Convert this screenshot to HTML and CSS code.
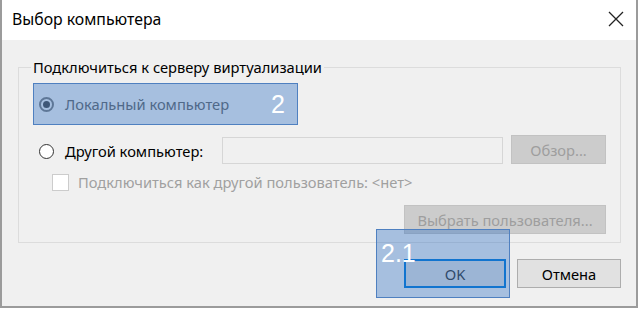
FILE: index.html
```html
<!DOCTYPE html>
<html lang="ru">
<head>
    <meta charset="UTF-8">
    <meta name="viewport" content="width=device-width, initial-scale=1.0">
    <title>Выбор компьютера</title>
    <link rel="stylesheet" href="styles.css">
</head>
<body>
    <div class="window">
        <div class="titlebar">
            <span class="title">Выбор компьютера</span>
            <svg class="close" width="16" height="16" viewBox="0 0 16 16">
                <path d="M1 1 L15 15 M15 1 L1 15" stroke="#222" stroke-width="1.3" fill="none"/>
            </svg>
        </div>
        <div class="content">
            <div class="group">
                <span class="legend">Подключиться к серверу виртуализации</span>
                <div class="row row-local">
                    <span class="radio checked"></span>
                    <span class="faded">Локальный компьютер</span>
                </div>
                <div class="row row-other">
                    <span class="radio-label"><span class="radio"></span>Другой компьютер:</span>
                    <div class="textbox"></div>
                    <div class="btn disabled browse">Обзор...</div>
                </div>
                <div class="row row-check">
                    <span class="check"></span>
                    <span class="muted">Подключиться как другой пользователь: &lt;нет&gt;</span>
                </div>
                <div class="row row-user">
                    <div class="btn disabled pick">Выбрать пользователя...</div>
                </div>
            </div>
            <div class="footer">
                <div class="btn default">OK</div>
                <div class="btn cancel">Отмена</div>
            </div>
        </div>
        <div class="mark mark-local"><span>2</span></div>
        <div class="mark mark-ok"><span>2.1</span></div>
    </div>
</body>
</html>
```

FILE: styles.css
```css
body {
    margin: 0;
    font-family: "Noto Sans", sans-serif;
    font-size: 14.7px;
    color: #000;
    background: #fff;
}
.window {
    position: relative;
    width: 638px;
    height: 308px;
    box-sizing: border-box;
    border: 2px solid #9b9b9b;
    border-top: none;
    background: #f0f0f0;
}
.titlebar {
    height: 40px;
    background: #fff;
    display: flex;
    align-items: center;
    justify-content: space-between;
    padding: 0 12px 0 10px;
}
.title {
    font-size: 15.8px;
    margin-top: -2px;
}
.close {
    margin-top: -3px;
}
.content {
    padding: 27px 15px 0 16px;
}
.group {
    position: relative;
    border: 1px solid #dcdcdc;
    padding: 26px 14px 8px 20px;
}
.legend {
    position: absolute;
    top: -11px;
    left: 12px;
    padding: 0 2px;
    background: #f0f0f0;
}
.row {
    display: flex;
    align-items: center;
}
.row-local {
    height: 20px;
}
.row-other {
    height: 29px;
    margin-top: 21px;
}
.row-check {
    height: 20px;
    margin-top: 8px;
    padding-left: 13px;
}
.row-user {
    margin-top: 13px;
    justify-content: flex-end;
}
.radio {
    width: 15px;
    height: 15px;
    box-sizing: border-box;
    border: 1.5px solid #333;
    border-radius: 50%;
    background: #fff;
    margin-right: 11px;
    display: flex;
    align-items: center;
    justify-content: center;
}
.radio.checked {
    border: 2px solid #7d7d7d;
    background: #f0f0f0;
}
.radio.checked::after {
    content: "";
    width: 7px;
    height: 7px;
    border-radius: 50%;
    background: #4a4a4a;
}
.faded {
    color: #666;
}
.radio-label {
    display: flex;
    align-items: center;
    width: 183px;
    margin-top: 3px;
}
.textbox {
    width: 281px;
    height: 27px;
    box-sizing: border-box;
    border: 1px solid #d6d6d6;
    background: #f0f0f0;
    margin-top: 2px;
    margin-right: 8px;
}
.btn {
    height: 29px;
    box-sizing: border-box;
    border: 1px solid #adadad;
    background: #e1e1e1;
    display: flex;
    align-items: center;
    justify-content: center;
}
.btn.disabled {
    background: #cccccc;
    border-color: #c2c2c2;
    color: #9e9e9e;
}
.browse {
    width: 95px;
}
.pick {
    width: 202px;
}
.check {
    width: 17px;
    height: 17px;
    box-sizing: border-box;
    border: 1px solid #cccccc;
    background: #fff;
    margin-right: 9px;
}
.muted {
    color: #a0a0a0;
}
.footer {
    display: flex;
    justify-content: flex-end;
    gap: 11px;
    margin-top: 16px;
}
.default {
    width: 102px;
    border: 2px solid #0078d7;
    color: #333;
}
.cancel {
    width: 104px;
}
.mark {
    position: absolute;
    box-sizing: border-box;
    border: 1px solid #4f80c0;
    background: rgba(45, 110, 195, 0.38);
    color: #fff;
    font-family: "Liberation Sans", sans-serif;
    font-size: 25px;
    line-height: 1;
}
.mark-local {
    left: 31px;
    top: 83px;
    width: 265px;
    height: 42px;
    display: flex;
    align-items: center;
    justify-content: flex-end;
    padding-right: 12px;
}
.mark-ok {
    left: 374px;
    top: 229px;
    width: 134px;
    height: 69px;
    padding: 11px 0 0 4px;
}
```
